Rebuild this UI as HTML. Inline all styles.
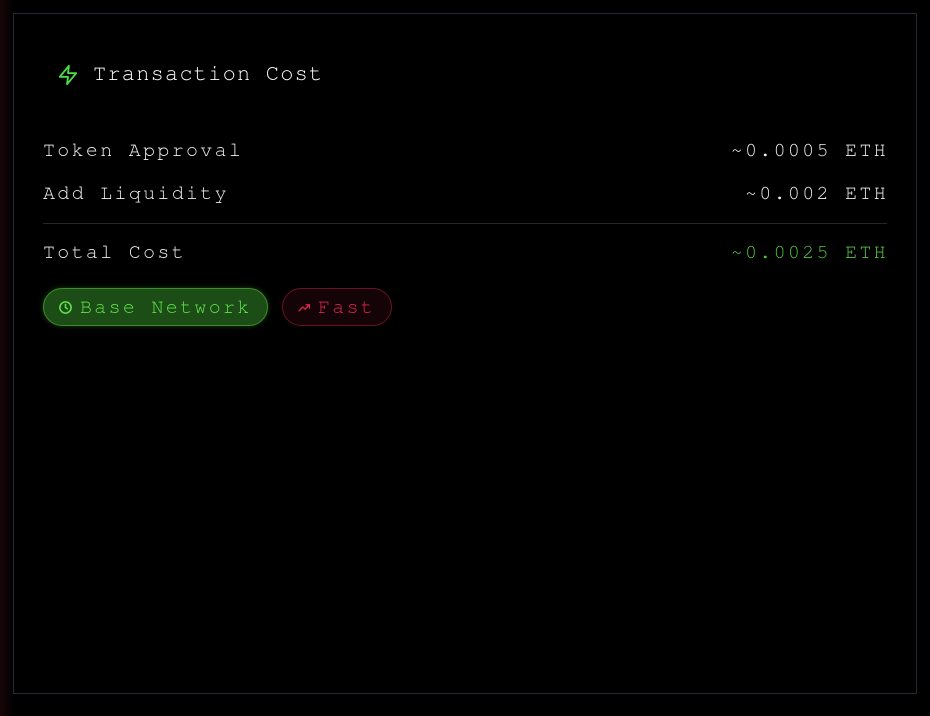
<!DOCTYPE html>
<html><head><style>
html,body{margin:0;width:930px;height:716px;background:#000;overflow:hidden;font-family:"Nimbus Mono PS","Nimbus Mono L","FreeMono","Courier New","Liberation Mono",monospace;}
body{background:linear-gradient(90deg,#1a0509 0,#0a0204 8px,#000 14px);}
.card{position:absolute;left:13px;top:13px;width:902px;height:679px;border:1px solid #232a33;background:#000;}
.t{position:absolute;white-space:nowrap;color:#f0f0f0;font-size:20px;letter-spacing:2.3px;line-height:20px;}
.title{font-size:22px;letter-spacing:1.2px;color:#fff;}
.r{text-align:right;}
.badge{position:absolute;top:288px;height:38px;border-radius:19px;box-sizing:border-box;display:flex;align-items:center;font-size:20px;letter-spacing:2.3px;white-space:nowrap;}
</style></head><body>
<div class="card"></div>
<svg style="position:absolute;left:57px;top:64px" width="22" height="22" viewBox="0 0 24 24" fill="none" stroke="#4ade4a" stroke-width="2" stroke-linejoin="round" stroke-linecap="round"><path d="M13 2 3 14h9l-1 8 10-12h-9l1-8z"/></svg>
<div class="t title" style="left:93px;top:64px">Transaction Cost</div>
<div class="t" style="left:43px;top:140px">Token Approval</div>
<div class="t r" style="right:42px;top:140px">~0.0005 ETH</div>
<div class="t" style="left:43px;top:183px">Add Liquidity</div>
<div class="t r" style="right:42px;top:183px">~0.002 ETH</div>
<div style="position:absolute;left:43px;top:223px;width:844px;height:1px;background:#262626"></div>
<div class="t" style="left:43px;top:242px">Total Cost</div>
<div class="t r" style="right:42px;top:242px;color:#52c83f">~0.0025 ETH</div>
<div class="badge" style="left:43px;width:225px;background:#1d4d16;border:1px solid #3e8a2e;color:#5ee04a;box-shadow:0 0 6px rgba(70,180,50,.35);padding-left:14px">
<svg width="15" height="15" viewBox="0 0 24 24" fill="none" stroke="#5ee04a" stroke-width="2.5" stroke-linecap="round"><circle cx="12" cy="12" r="9"/><path d="M12 7v5l3 2"/></svg><span style="margin-left:7px">Base Network</span></div>
<div class="badge" style="left:282px;width:110px;background:#140307;border:1px solid #6a1226;color:#e0254f;padding-left:15px">
<svg width="13" height="13" viewBox="0 0 24 24" fill="none" stroke="#e0254f" stroke-width="2.5" stroke-linecap="round" stroke-linejoin="round"><path d="M2 18l7-7 4 4 8-8"/><path d="M15 7h6v6"/></svg><span style="margin-left:7px">Fast</span></div>
</body></html>
